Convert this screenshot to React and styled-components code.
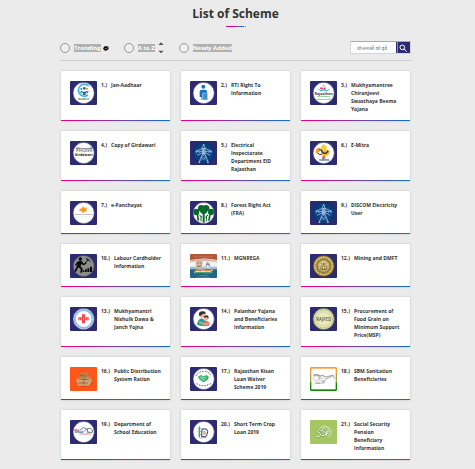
import React from "react";
import styled, { createGlobalStyle } from "styled-components";

const NAVY = "#2c2a70";

const GlobalStyle = createGlobalStyle`
  *, *::before, *::after { box-sizing: border-box; }
  body {
    margin: 0;
    background: #ebebeb;
    color: #333;
    font-family: "Open Sans", "Noto Sans", sans-serif;
  }
`;

const Page = styled.main`
  padding: 5px 65px 9px 61px;
`;

const Title = styled.h1`
  margin: 0;
  font-size: 12px;
  line-height: 18px;
  font-weight: 700;
  text-align: center;
  color: #333;
`;

const Underline = styled.div`
  width: 20px;
  height: 1px;
  margin: 3px auto 0;
  background: linear-gradient(90deg, #e6007e 0 35%, #2a6fd0 75% 88%, transparent 88% 93%, #2a8fe0 93%);
`;

const Toolbar = styled.form`
  display: flex;
  align-items: center;
  gap: 15px;
  height: 34px;
  padding-top: 9px;
  padding-bottom: 1px;
  margin: 0 -1px 10px;
  border-bottom: 1px solid #cfcfcf;
`;

const Option = styled.label`
  display: flex;
  align-items: center;
  gap: 4px;
  font-size: 6px;
  line-height: 8px;
  font-weight: 700;
  color: #fff;
  white-space: nowrap;
`;

const Radio = styled.input`
  appearance: none;
  width: 10px;
  height: 10px;
  margin: 0;
  border: 1px solid #999;
  border-radius: 50%;
  background: #eee;
  &:checked { box-shadow: inset 0 0 0 2px #eee; background: #555; }
`;

const OptionText = styled.span`
  background: #b1b1b1;
`;

const Adornment = styled.span`
  display: flex;
  margin-left: ${(p) => (p.$tight ? "-2px" : "-1px")};
`;

const Search = styled.div`
  display: flex;
  width: 61px;
  height: 13px;
  margin-left: auto;
  border: 1px solid #d5d5d5;
  border-top-color: #aaa;
  background: #fff;
`;

const SearchInput = styled.input`
  flex: 1;
  min-width: 0;
  padding: 0 0 0 6px;
  border: 0;
  background: #fff;
  font-family: "Noto Sans", "Noto Sans Devanagari", sans-serif;
  font-size: 5px;
  color: #555;
  &::placeholder { color: #777; }
`;

const SearchButton = styled.button`
  display: grid;
  place-items: center;
  width: 14px;
  padding: 0;
  border: 0;
  background: ${NAVY};
  box-shadow: inset 1px 0 0 ${NAVY}, inset 2px 0 0 #8c8ab5;
`;

const Grid = styled.ol`
  display: grid;
  grid-template-columns: repeat(3, minmax(0, 1fr));
  gap: 10px 11px;
  margin: 0;
  padding: 0;
  list-style: none;
`;

const Card = styled.li`
  display: flex;
  align-items: flex-start;
  padding: 10px 8px 8px 9px;
  background: linear-gradient(90deg, #e6007e, #7b3fa0 50%, #1272bc) bottom / 100% 1px no-repeat #fff;
  box-shadow: 0 0 2px rgba(0, 0, 0, 0.2);
`;

const Thumb = styled.svg`
  flex: none;
  width: 27px;
  height: 24px;
  margin: 0 4px 1px 0;
  border-radius: 1px;
`;

const Number = styled.span`
  flex: none;
  width: ${(p) => (p.$wide ? "13px" : "10px")};
  font-size: 5px;
  line-height: 8px;
  font-weight: 700;
  white-space: nowrap;
`;

const Name = styled.h2`
  margin: 0;
  font-size: 5px;
  line-height: 8px;
  font-weight: 700;
  white-space: nowrap;
`;

const sans = { fontFamily: '"Open Sans", sans-serif', textAnchor: "middle" };

const Disc = ({ fill = "#fff", ring = "#3a3a60" }) => (
  <>
    <rect width="81" height="72" fill={NAVY} />
    <circle cx="41" cy="36" r="32" fill={fill} stroke={ring} strokeWidth="2" />
  </>
);

const JanAadhaar = () => (
  <>
    <Disc />
    <path d="M56 15A18 18 0 1 0 54 42" fill="none" stroke="#35b6e8" strokeWidth="5" />
    <circle cx="34" cy="24" r="3" fill="#17a45c" />
    <circle cx="51" cy="23" r="3" fill="#f28a1c" />
    <circle cx="43" cy="22" r="4" fill="#1b67ad" />
    <path d="M33 29l6 3h7l6-3 1 4-6 3v6h-8v-6l-6-3z" fill="#1b67ad" />
    <path d="M30 31l5 7M55 30l-4 7" stroke="#17a45c" strokeWidth="3" />
    <text x="41" y="56" fontSize="8" fontWeight="700" fill="#444" {...sans}>जन आधार</text>
  </>
);

const Rti = () => (
  <>
    <Disc />
    <circle cx="40" cy="17" r="6" fill="#1675bd" />
    <path d="M29 31q0-5 6-5h10q6 0 6 5v7H38v18h-4v-8h-5z" fill="#1675bd" />
    <path d="M38 36h15v21H38z" fill="#4b9bd4" stroke="#e6f2fa" strokeWidth="1" />
    <path d="M33 34v14M41 41h9M41 46h9M41 51h9" stroke="#0d5c9b" strokeWidth="1" />
  </>
);

const Chiranjeevi = () => (
  <>
    <Disc />
    <path d="M22 22q10 9 19 1 9 8 20-1-4 9-13 8-5 0-7-3-3 4-8 3-8 0-11-8z" fill="#20b6a6" />
    <path d="M30 25q-1-8 6-6l4 6 5-8 3 8z" fill="#ed3292" />
    <circle cx="41" cy="14" r="3" fill="#f3a51d" />
    <text x="41" y="41" fontSize="11" fontWeight="700" fill="#403b42" {...sans}>Rajasthan</text>
    <text x="41" y="49" fontSize="7" fontWeight="700" fill="#35a35b" {...sans}>Chiranjeevi</text>
    <text x="41" y="56" fontSize="6" fontWeight="700" fill="#169ddd" {...sans}>Swasthya Bima</text>
  </>
);

const Girdawari = () => (
  <>
    <Disc />
    <text x="41" y="32" fontSize="17" fill="#444" {...sans}>गिरदावरी</text>
    <text x="41" y="46" fontSize="11" fontWeight="700" fill="#222" {...sans}>Girdawari</text>
  </>
);

const Pylon = () => (
  <>
    <Disc fill="#073f80" ring="#152958" />
    <g fill="none" stroke="#c6dff0" strokeWidth="2">
      <path d="M37 20l4-11 4 11v20l10 24M37 20v20L27 64" />
      <path d="M17 31l20-9h8l20 9H17M21 43l16-8h8l16 8" />
      <path d="M37 40h8M33 50h16l-19 9M37 40l12 10M45 40l-12 10 19 9" strokeWidth="1" />
      <path d="M19 32v5M63 32v5M27 32v4M55 32v4" />
      <path d="M26 64h5M51 64h5" strokeWidth="3" />
    </g>
    <path d="M38 21h6v20h-6z" fill="#8fb7d6" />
  </>
);

const EMitra = () => (
  <>
    <Disc />
    <path d="M41 9l8 8 1 8-9 3-9-3 1-8z" fill="#f8cf22" />
    <path d="M18 25q5-6 12-4l1 9-11 8q-5-5-2-13z" fill="#f6a42c" />
    <path d="M33 29l18-3 10 6-6 9-10 5-12-5z" fill="#f7b92a" />
    <path d="M36 45l10-1-1 9-7-1z" fill="#f16b32" />
    <path d="M28 26q7-1 8 6l5 5 8-1 6-7" fill="none" stroke="#28305c" strokeWidth="4" />
    <path d="M23 36l7 5 5-1" fill="none" stroke="#28305c" strokeWidth="3" />
    <text x="42" y="59" fontSize="8" fontWeight="700" fill="#293369" {...sans}>e-Mitra</text>
  </>
);

const Panchayat = () => (
  <>
    <Disc />
    <path d="M29 23l7-1 3-7 5 6 7-2-2 8 3 4-8 1-5 5-4-6-7-1z" fill="#f7a12d" />
    <path d="M35 25l6 3 5-3M41 28v6" fill="none" stroke="#ce6f19" strokeWidth="1" />
    <text x="41" y="42" fontSize="5" fontWeight="700" fill="#888" {...sans}>Rajasthan Panchayat</text>
    <path d="M22 46h39" stroke="#ccc" strokeWidth="1" />
  </>
);

const Forest = () => (
  <>
    <Disc />
    <g fill="#08672c">
      <circle cx="34" cy="22" r="10" />
      <circle cx="48" cy="22" r="10" />
      <circle cx="41" cy="28" r="11" />
      <ellipse cx="19" cy="33" rx="9" ry="10" />
      <ellipse cx="63" cy="33" rx="9" ry="10" />
      <path d="M38 34h6v31h-6zM20 41h5l3 20-6-4zM57 41h5l-2 16-6 4z" />
    </g>
    <path d="M33 44v17M49 44v17M28 42l8 7M54 42l-8 7" fill="none" stroke="#08672c" strokeWidth="3" />
  </>
);

const Labour = () => (
  <>
    <Disc fill="#8c8c8c" ring="#34343c" />
    <circle cx="31" cy="15" r="5" fill="#070707" />
    <path d="M22 23l8-3 6 2 5 7 7-3 1 3-9 5-6-5-2 9 6 6-2 12h-5l1-11-7-5-7 14-5-2 8-17 2-7-4 7-4-2z" fill="#070707" />
    <path d="M42 32l12-15M48 14q9 1 12 9" fill="none" stroke="#070707" strokeWidth="3" />
    <path d="M38 54v-5h5v5zM45 54v-8h5v8zM52 54V43h6v11zM60 54V38h6v16z" fill="#070707" />
  </>
);

const Mgnrega = () => (
  <>
    <rect width="81" height="72" fill="#f1f3f2" />
    <path d="M0 0h81v18q-38-10-81 1z" fill="#b4573b" />
    <path d="M0 20q38-12 81 0v5q-40-8-81 0z" fill="#d9b5a5" />
    <path d="M0 45h81v27H0z" fill="#246485" />
    <path d="M0 38h81v8H0z" fill="#9fc0d0" />
    <path d="M17 28q0-13 11-13t10 14l-3 13-8 3-8-4z" fill="#d8b8a0" />
    <path d="M21 35l6 3 7-3M22 27h5m4 0h4" fill="none" stroke="#4d4543" strokeWidth="2" />
    <path d="M44 27q8-13 18 0v14H44z" fill="#e5ecee" />
    <path d="M47 40l6-15 7 15M49 31h10" fill="none" stroke="#566670" strokeWidth="2" />
    <path d="M13 50q15-9 29-4t26-2v5q-14 6-28 2t-27 3z" fill="#ee8f4c" />
    <path d="M13 54q14-6 27-3t28-2v2q-14 5-28 3t-27 2z" fill="#fff" />
    <path d="M13 56q15-5 28-2t27-2v4q-15 4-28 2t-27 1z" fill="#55a56d" />
    <text x="40" y="8" fontSize="6" fill="#dd9a84" {...sans}>MAHATMA GANDHI</text>
    <text x="40" y="65" fontSize="6" fill="#9cc3d6" {...sans}>MGNREGA</text>
    <text x="40" y="71" fontSize="5" fill="#9cc3d6" {...sans}>Rural Employment</text>
  </>
);

const Mining = () => (
  <>
    <Disc fill="#a78c42" ring="#3e3423" />
    <circle cx="41" cy="36" r="26" fill="none" stroke="#e2d195" strokeWidth="4" strokeDasharray="5 3" />
    <circle cx="41" cy="36" r="19" fill="#c9b36c" stroke="#705a22" strokeWidth="2" />
    <path d="M29 29q12-15 24 0l-4 17H33z" fill="#eee0aa" />
    <path d="M31 27l5 3h10l5-4M34 31l-2 15h18l-2-15M37 36h8v10h-8zM41 24v12" fill="none" stroke="#66501c" strokeWidth="2" />
  </>
);

const Medicine = () => (
  <>
    <Disc />
    <circle cx="41" cy="36" r="27" fill="none" stroke="#77aede" strokeWidth="6" />
    <circle cx="41" cy="36" r="27" fill="none" stroke="#fff" strokeWidth="2" strokeDasharray="3 3" />
    <path d="M36 22h9v9h11v9H45v9h-9v-9H25v-9h11z" fill="#f24852" />
    <path d="M27 36h28" stroke="#fff" strokeWidth="2" strokeDasharray="3 3" />
  </>
);

const Palanhar = () => (
  <>
    <Disc />
    <path d="M21 54q1-17 14-20l14 8 11 12-10 4q-15 0-29-4z" fill="#22a596" />
    <circle cx="37" cy="24" r="8" fill="#f3b18e" />
    <path d="M27 25q-2-12 10-12 10-1 11 7l-10 1-8 7z" fill="#333237" />
    <circle cx="48" cy="35" r="6" fill="#f3b18e" />
    <path d="M41 33q1-9 8-8 9 1 6 10l-5-5z" fill="#333237" />
    <path d="M40 44q9-5 19 2l-3 10H42z" fill="#ef6c64" />
    <path d="M28 45l14 7 14-2" fill="none" stroke="#efb08c" strokeWidth="4" />
  </>
);

const Rajfed = () => (
  <>
    <Disc fill="#e7e6b4" ring="#46563e" />
    <circle cx="41" cy="36" r="27" fill="none" stroke="#9eaa78" strokeWidth="3" strokeDasharray="3 2" />
    <circle cx="41" cy="36" r="21" fill="#eee9bb" stroke="#b1b684" />
    <text x="41" y="41" fontSize="13" fontWeight="600" fill="#3f6045" {...sans}>RAJFED</text>
  </>
);

const Ration = () => (
  <>
    <rect width="81" height="72" fill="#ff5718" />
    <ellipse cx="43" cy="46" rx="27" ry="15" fill="#f04516" />
    <path d="M17 38l17-12 27 3 7 13-10 14-33 2z" fill="#c08c59" />
    <path d="M28 15l11 7 11-10 5 13-10 9-16-5z" fill="#b5814f" />
    <path d="M19 39q10-11 22 0v16H22zM43 39q9-10 22 0l-6 16H39z" fill="#d2a271" />
    <path d="M29 24l18 3M26 36l30 2M24 48h30M43 36l-4 17" stroke="#7f522f" strokeWidth="2" />
  </>
);

const Waiver = () => (
  <>
    <Disc />
    <path d="M18 27Q24 13 41 13T64 27" fill="none" stroke="#444" strokeWidth="3" strokeDasharray="4 4" />
    <path d="M20 50q20 12 42 0" fill="none" stroke="#444" strokeWidth="3" strokeDasharray="4 4" />
    <path d="M24 29l8-5 9 4 8-4 8 6-5 9-11 7-12-8z" fill="#2bae67" />
    <path d="M29 32l7-3 6 4 7-3M32 37l5-3 4 6 5-5" fill="none" stroke="#d9fff0" strokeWidth="2" />
  </>
);

const Sanitation = () => (
  <>
    <rect width="81" height="26" rx="3" fill="#ff9933" />
    <rect y="22" width="81" height="26" fill="#9aa84a" />
    <rect y="46" width="81" height="26" rx="3" fill="#138808" />
    <rect x="4" y="5" width="73" height="62" fill="#fff" />
    <g fill="none" stroke="#777" strokeWidth="1">
      <ellipse cx="20" cy="34" rx="10" ry="8" />
      <ellipse cx="38" cy="34" rx="9" ry="8" />
      <path d="M11 26q10-6 18 1 10-6 17 3l22-5M48 36l22-11 3 10M47 40q-4 6-12 4M10 24q10-4 19 2" strokeWidth="2" />
      <path d="M24 28l5 6-7 3M37 29l-3 6 7 1" stroke="#cab26a" strokeWidth="2" />
    </g>
    <text x="28" y="50" fontSize="7" fill="#666" {...sans}>स्वच्छ भारत</text>
  </>
);

const Education = () => (
  <>
    <Disc />
    <path d="M13 31q4-5 8-1t7-2" fill="none" stroke="#df4257" strokeWidth="3" />
    <text x="27" y="40" fontSize="8" fontWeight="700" fill="#2b4b79" {...sans}>School</text>
    <path d="M30 30l11-8 11 8M52 37V26q10-5 15 4v7z" fill="none" stroke="#333" strokeWidth="2" />
    <path d="M42 36l6-10 8 10" fill="none" stroke="#43a5db" strokeWidth="2" />
    <path d="M28 42h36" stroke="#df4257" strokeWidth="2" />
  </>
);

const Crop = () => (
  <>
    <Disc />
    <path d="M28 19v34M24 25l4 4 4-4M24 34l4 4 4-4M24 43l4 4 4-4" fill="none" stroke="#33965a" strokeWidth="3" />
    <path d="M36 27h13q7 6 3 14l-5 9H35z" fill="#fff" stroke="#28366e" strokeWidth="3" />
    <rect x="39" y="32" width="9" height="13" fill="#f8d7a1" />
    <path d="M40 37q4-4 6 0t-5 5M31 54l19-2" fill="none" stroke="#ae7b4d" strokeWidth="2" />
  </>
);

const Pension = () => (
  <>
    <rect width="81" height="72" fill="#a5c763" />
    <path d="M29 25q15-13 29 0t-3 27M33 25q10-10 21-1t0 22" fill="none" stroke="#e3f0c8" strokeWidth="2" />
    <g fill="none" stroke="#6f9457" strokeWidth="5">
      <path d="M34 31q-12-5-12 4 10 3 10 9-1 8-12 5M49 28q-12-6-13 3 10 4 12 10-1 8-13 6" />
      <path d="M50 48V33q9-3 8 5-2 4-8 2" />
    </g>
    <g fill="none" stroke="#f6faee" strokeWidth="3">
      <path d="M34 31q-12-5-12 4 10 3 10 9-1 8-12 5M49 28q-12-6-13 3 10 4 12 10-1 8-13 6" />
      <path d="M50 48V33q9-3 8 5-2 4-8 2" />
    </g>
  </>
);

const schemes = [
  [JanAadhaar, "Jan-Aadhaar"],
  [Rti, "RTI Right To", "Information"],
  [Chiranjeevi, "Mukhyamantree", "Chiranjeevi", "Swasthaya Beema", "Yojana"],
  [Girdawari, "Copy of Girdawari"],
  [Pylon, "Electrical", "Inspectorate", "Department EID", "Rajasthan"],
  [EMitra, "E-Mitra"],
  [Panchayat, "e-Panchayat"],
  [Forest, "Forest Right Act", "(FRA)"],
  [Pylon, "DISCOM Electricity", "User"],
  [Labour, "Labour Cardholder", "Information"],
  [Mgnrega, "MGNREGA"],
  [Mining, "Mining and DMFT"],
  [Medicine, "Mukhyamantri", "Nishulk Dawa &", "Janch Yojna"],
  [Palanhar, "Palanhar Yojana", "and Beneficiaries", "Information"],
  [Rajfed, "Procurement of", "Food Grain on", "Minimum Support", "Price(MSP)"],
  [Ration, "Public Distribution", "System Ration"],
  [Waiver, "Rajasthan Kisan", "Loan Waiver", "Scheme 2019"],
  [Sanitation, "SBM Sanitation", "Beneficiaries"],
  [Education, "Department of", "School Education"],
  [Crop, "Short Term Crop", "Loan 2019"],
  [Pension, "Social Security", "Pension", "Beneficiary", "Information"],
];

export default function App() {
  return (
    <Page>
      <GlobalStyle />
      <Title>List of Scheme</Title>
      <Underline />
      <Toolbar onSubmit={(e) => e.preventDefault()}>
        <Option>
          <Radio type="radio" name="sort" value="trending" />
          <OptionText>Trending</OptionText>
          <Adornment $tight>
            <svg width="6" height="6" viewBox="0 0 18 18" aria-hidden="true">
              <path d="M1 9l4-5 6 0 5 1 1 6-4 5-7 1-5-4z" fill="#050505" />
              <path d="M5 12l3-2 2 1 4-3" fill="none" stroke="#ddd" strokeWidth="2" />
            </svg>
          </Adornment>
        </Option>
        <Option>
          <Radio type="radio" name="sort" value="az" />
          <OptionText>A to Z</OptionText>
          <Adornment>
            <svg width="6" height="12" viewBox="0 0 18 36" aria-hidden="true">
              <path d="M1 9l8-8 8 8zM1 26h16l-8 8z" fill="#555" />
            </svg>
          </Adornment>
        </Option>
        <Option>
          <Radio type="radio" name="sort" value="new" />
          <OptionText>Newly Added</OptionText>
        </Option>
        <Search>
          <SearchInput type="search" aria-label="योजनाओं को ढूंढे" placeholder="योजनाओं को ढूंढे" />
          <SearchButton type="submit" aria-label="Search">
            <svg width="8" height="8" viewBox="0 0 24 24" fill="none" stroke="#fff" strokeWidth="3" aria-hidden="true">
              <circle cx="10" cy="10" r="7" />
              <path d="M15 15l8 8" />
            </svg>
          </SearchButton>
        </Search>
      </Toolbar>
      <Grid>
        {schemes.map(([Art, ...lines], i) => (
          <Card key={i}>
            <Thumb viewBox="0 0 81 72" preserveAspectRatio="none" aria-hidden="true">
              <Art />
            </Thumb>
            <Number $wide={i > 8}>{i + 1}.)</Number>
            <Name>
              {lines.map((line, n) => (
                <React.Fragment key={line}>
                  {n > 0 && <br />}
                  {line}
                </React.Fragment>
              ))}
            </Name>
          </Card>
        ))}
      </Grid>
    </Page>
  );
}
